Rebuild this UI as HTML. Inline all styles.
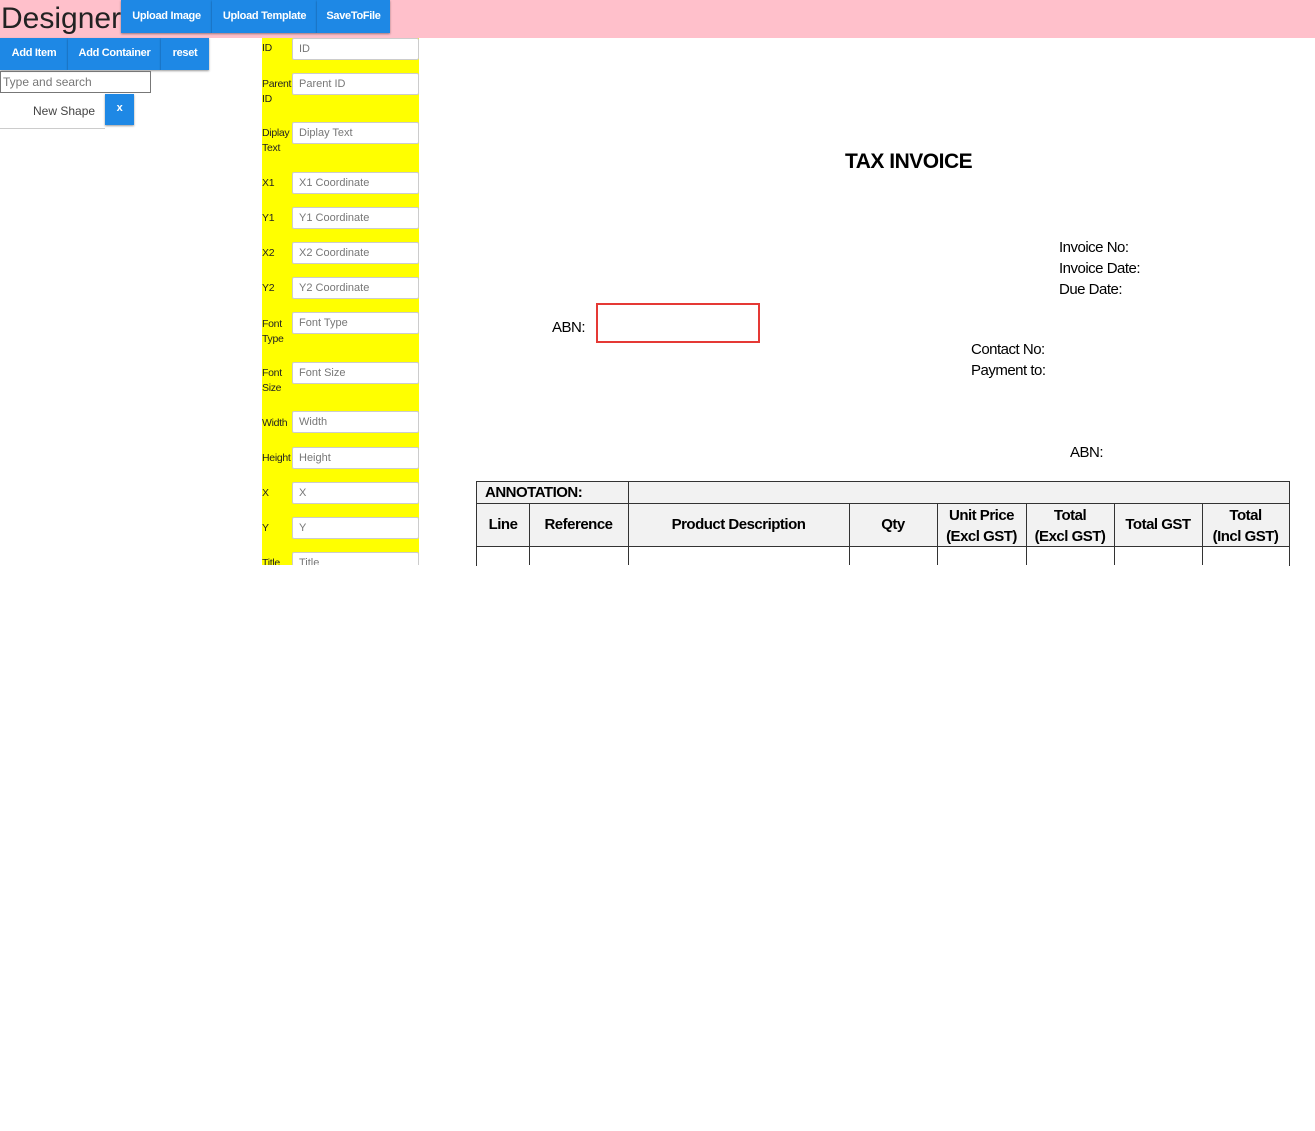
<!DOCTYPE html>
<html><head><meta charset="utf-8"><style>
body{margin:0;width:1315px;height:1131px;background:#fff;position:relative;font-family:"Liberation Sans",sans-serif;overflow:hidden}
.a{position:absolute}
.btn{position:absolute;background:#1e88e5;color:#fff;font-size:11px;font-weight:bold;text-align:center;box-shadow:0 1px 2px rgba(0,0,0,.4);letter-spacing:-0.3px}
.lab{position:absolute;left:262px;font-size:10.5px;color:#222;line-height:15px;width:30px;letter-spacing:-0.3px}
.inp{position:absolute;left:292px;height:20px;border:1px solid #ccc;border-radius:2px;background:#fff;font-size:11px;color:#777;line-height:20px;padding-left:6px;width:119px}
.t{position:absolute;font-weight:bold;font-size:15px;color:#000;letter-spacing:-0.5px}
.tb{position:absolute;border-left:1px solid #333;top:503px;height:62px}
</style></head><body>
<div class="a" style="left:0;top:0;width:1315px;height:38px;background:#ffc0cb"></div>
<div class="a" style="left:1px;top:1px;font-size:30px;color:#222;line-height:36px">Designer</div>
<div class="btn" style="left:121px;top:0;width:91px;height:33px;line-height:33px">Upload Image</div>
<div class="btn" style="left:212px;top:0;width:105px;height:33px;line-height:33px">Upload Template</div>
<div class="btn" style="left:317px;top:0;width:73px;height:33px;line-height:33px">SaveToFile</div>
<div class="btn" style="left:0;top:38px;width:68px;height:32px;line-height:30px">Add Item</div>
<div class="btn" style="left:68px;top:38px;width:93px;height:32px;line-height:30px">Add Container</div>
<div class="btn" style="left:161px;top:38px;width:48px;height:32px;line-height:30px">reset</div>
<div class="a" style="left:0;top:71px;border:1px solid #777;font-size:12px;color:#777;line-height:20px;padding-left:2px;box-sizing:border-box;width:151px;height:22px">Type and search</div>
<div class="a" style="left:33px;top:104px;font-size:12px;color:#444">New Shape</div>
<div class="a" style="left:0;top:128px;width:105px;border-top:1px solid #ccc"></div>
<div class="btn" style="left:105px;top:94px;width:29px;height:31px;line-height:29px">x</div>
<div class="a" style="left:262px;top:38px;width:157px;height:527px;background:#ffff00"></div>
<div class="lab" style="top:41px">ID</div><div class="inp" style="top:38px">ID</div>
<div class="lab" style="top:77px">Parent ID</div><div class="inp" style="top:73px">Parent ID</div>
<div class="lab" style="top:126px">Diplay Text</div><div class="inp" style="top:122px">Diplay Text</div>
<div class="lab" style="top:176px">X1</div><div class="inp" style="top:172px">X1 Coordinate</div>
<div class="lab" style="top:211px">Y1</div><div class="inp" style="top:207px">Y1 Coordinate</div>
<div class="lab" style="top:246px">X2</div><div class="inp" style="top:242px">X2 Coordinate</div>
<div class="lab" style="top:281px">Y2</div><div class="inp" style="top:277px">Y2 Coordinate</div>
<div class="lab" style="top:317px">Font Type</div><div class="inp" style="top:312px">Font Type</div>
<div class="lab" style="top:366px">Font Size</div><div class="inp" style="top:362px">Font Size</div>
<div class="lab" style="top:416px">Width</div><div class="inp" style="top:411px">Width</div>
<div class="lab" style="top:451px">Height</div><div class="inp" style="top:447px">Height</div>
<div class="lab" style="top:486px">X</div><div class="inp" style="top:482px">X</div>
<div class="lab" style="top:521px">Y</div><div class="inp" style="top:517px">Y</div>
<div class="a" style="left:262px;top:552px;width:157px;height:13px;overflow:hidden"><div class="lab" style="left:0;top:4px">Title</div><div class="inp" style="left:30px;top:0">Title</div></div>
<div class="a" style="left:0;top:565px;width:1315px;height:566px;background:#fff"></div>
<div class="t" style="left:845px;top:150px;font-size:21px">TAX INVOICE</div>
<div class="t" style="left:1059px;top:237px;font-weight:normal;font-size:15px;line-height:21px">Invoice No:<br>Invoice Date:<br>Due Date:</div>
<div class="t" style="left:552px;top:319px;font-weight:normal">ABN:</div>
<div class="a" style="left:596px;top:303px;width:160px;height:36px;border:2px solid #e53935"></div>
<div class="t" style="left:971px;top:339px;font-weight:normal;line-height:21px">Contact No:<br>Payment to:</div>
<div class="t" style="left:1070px;top:444px;font-weight:normal">ABN:</div>
<div class="a" style="left:476px;top:481px;width:812px;height:84px;border:1px solid #333;border-bottom:none;background:linear-gradient(#f2f2f2 0,#f2f2f2 65px,#fff 65px)"></div>
<div class="a" style="left:477px;top:503px;width:812px;border-top:1px solid #333"></div>
<div class="a" style="left:477px;top:546px;width:812px;border-top:1px solid #333"></div>
<div class="a" style="left:628px;top:481px;height:22px;border-left:1px solid #333"></div>
<div class="tb" style="left:529px"></div><div class="tb" style="left:628px"></div><div class="tb" style="left:849px"></div><div class="tb" style="left:937px"></div><div class="tb" style="left:1026px"></div><div class="tb" style="left:1114px"></div><div class="tb" style="left:1202px"></div>
<div class="t" style="left:485px;top:484px">ANNOTATION:</div>
<div class="t" style="left:477px;top:516px;width:52px;text-align:center">Line</div>
<div class="t" style="left:529px;top:516px;width:99px;text-align:center">Reference</div>
<div class="t" style="left:628px;top:516px;width:221px;text-align:center">Product Description</div>
<div class="t" style="left:849px;top:516px;width:88px;text-align:center">Qty</div>
<div class="t" style="left:937px;top:505px;width:89px;text-align:center;line-height:21px">Unit Price<br>(Excl GST)</div>
<div class="t" style="left:1026px;top:505px;width:88px;text-align:center;line-height:21px">Total<br>(Excl GST)</div>
<div class="t" style="left:1114px;top:516px;width:88px;text-align:center">Total GST</div>
<div class="t" style="left:1202px;top:505px;width:87px;text-align:center;line-height:21px">Total<br>(Incl GST)</div>
</body></html>
